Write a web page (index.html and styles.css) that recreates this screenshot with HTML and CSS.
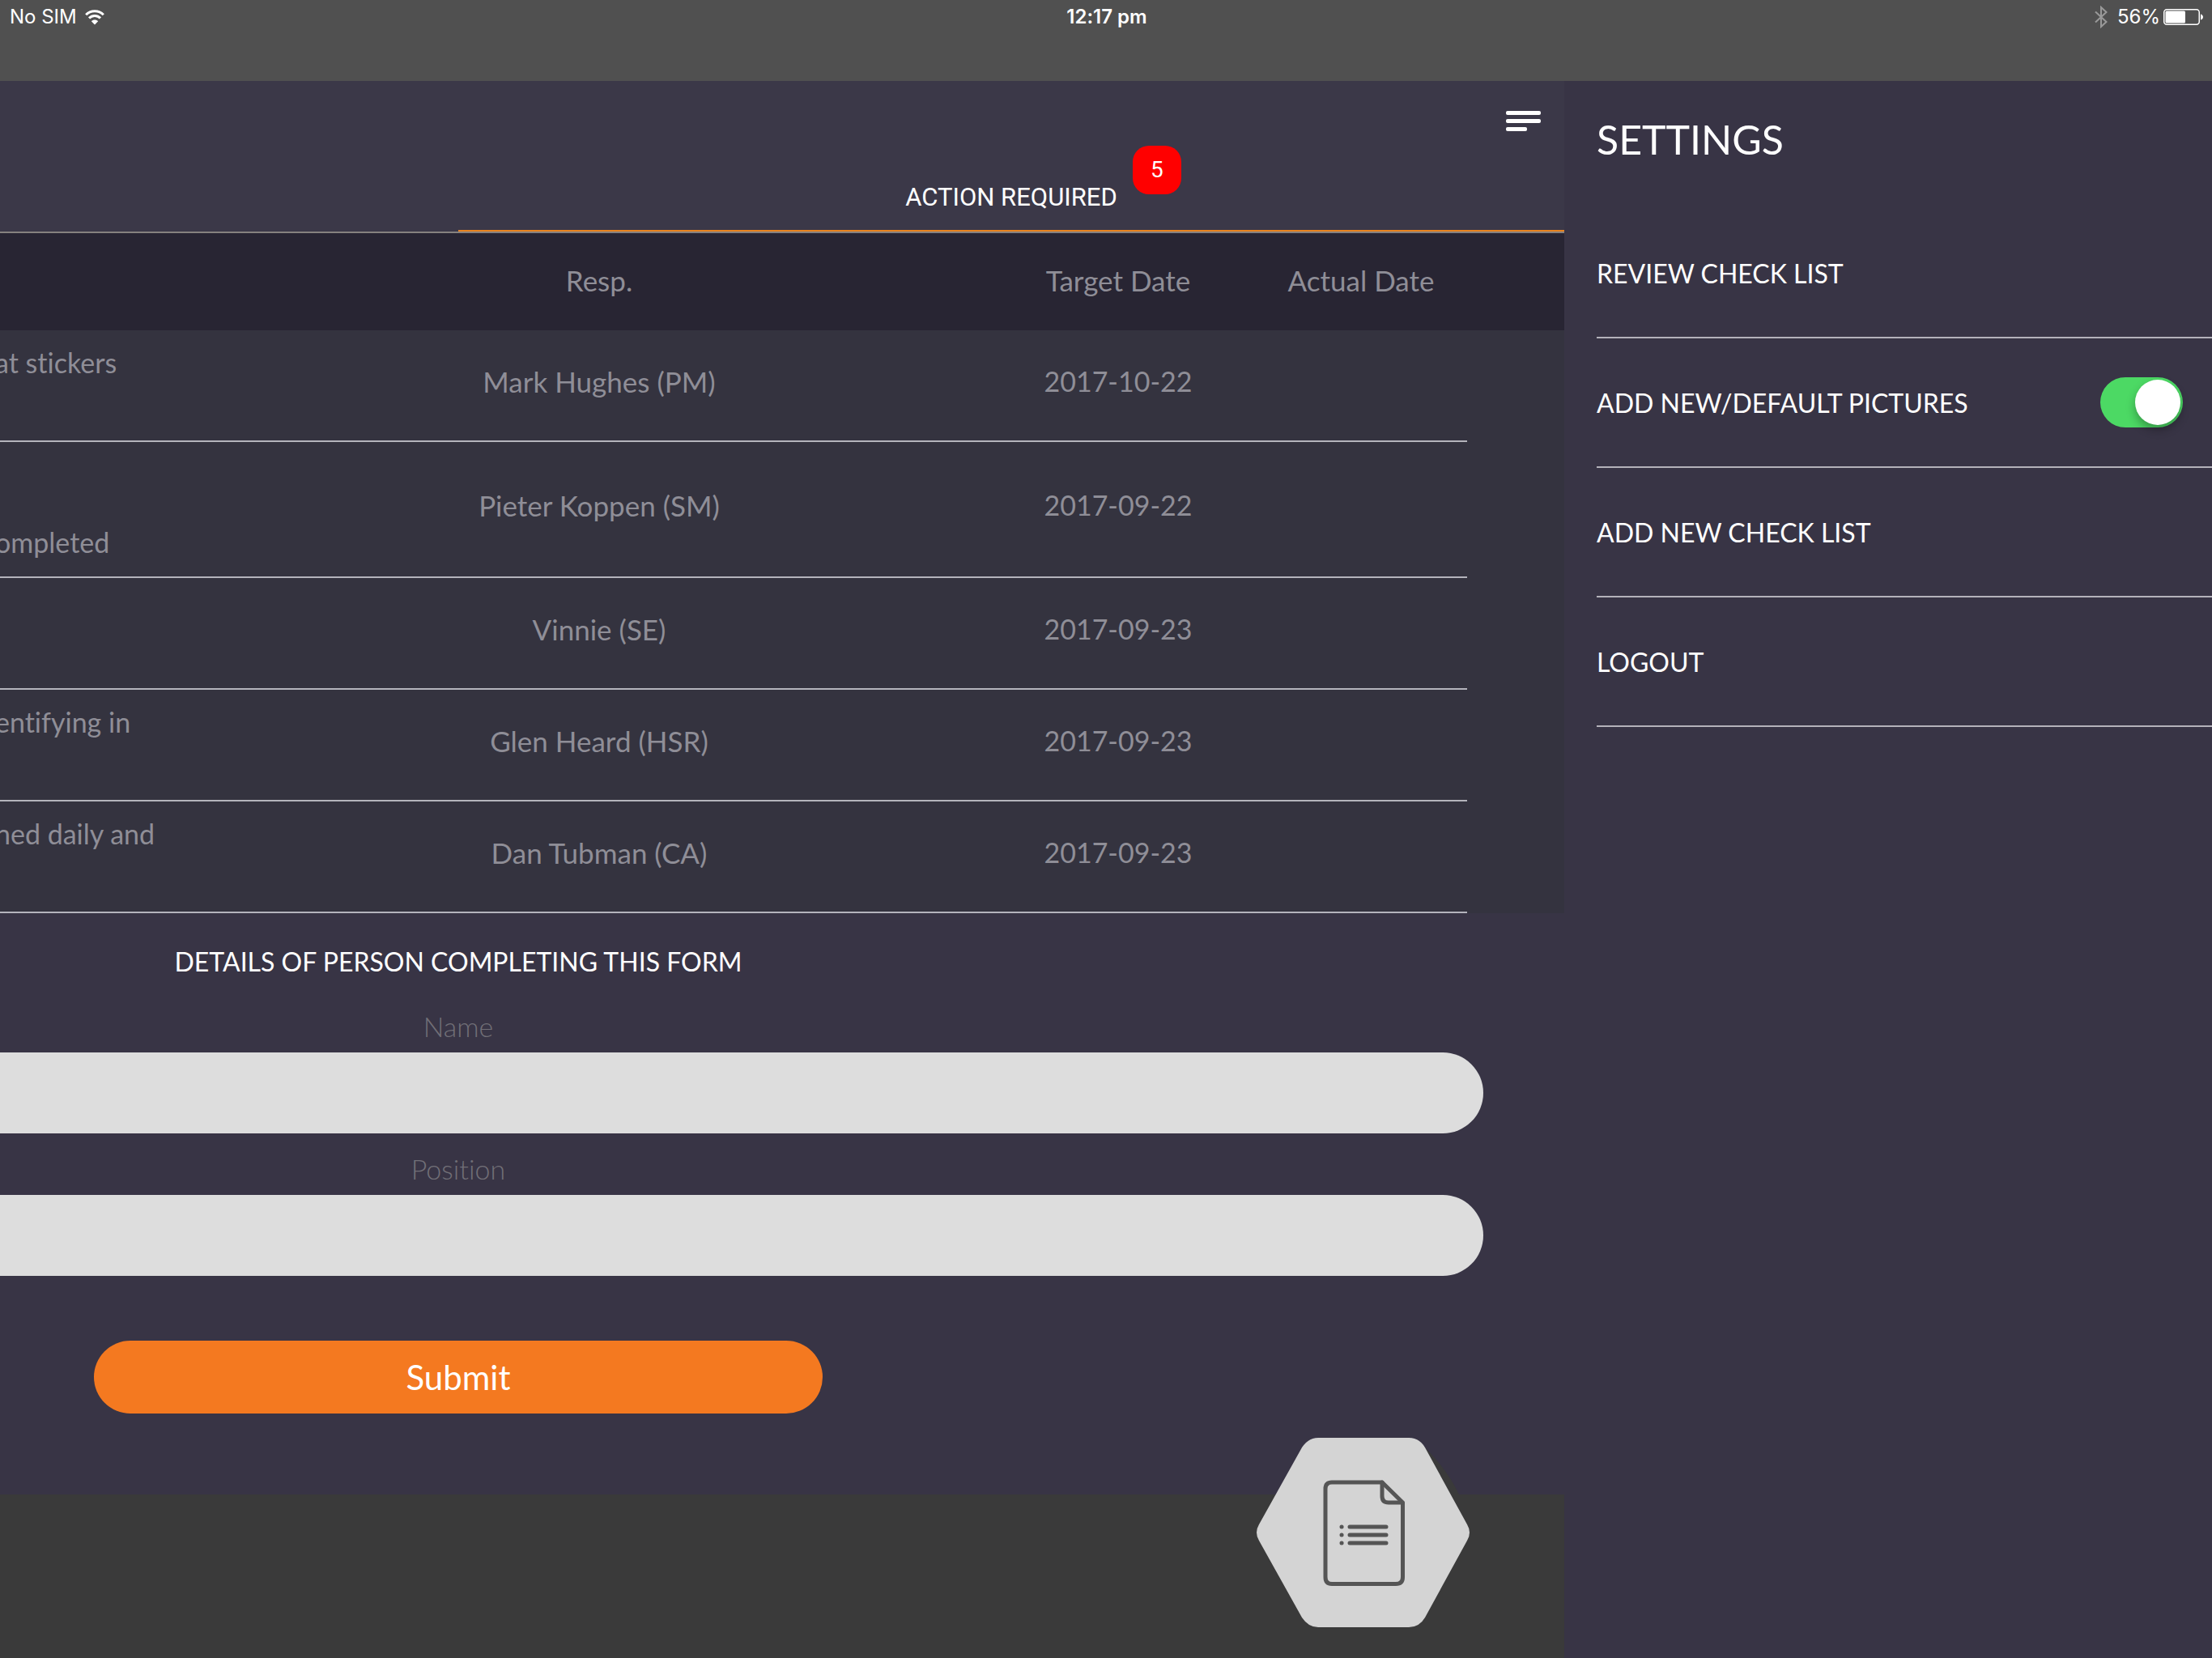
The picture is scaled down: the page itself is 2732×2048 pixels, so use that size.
FILE: index.html
```html
<!DOCTYPE html>
<html lang="en">
<head>
<meta charset="utf-8">
<meta name="viewport" content="width=device-width, initial-scale=1">
<title>Check list</title>
<link rel="stylesheet" href="styles.css">
</head>
<body>
<div class="status">
  <div class="status-left">
    <span>No SIM</span>
    <svg width="24" height="19" viewBox="0 0 24 19" aria-hidden="true">
      <g fill="none" stroke="#fff" stroke-width="3">
        <path d="M1.2 6.2C7 .2 17 .2 22.800 6.200"/>
        <path d="M5 10.400C9 6.400 15 6.400 19 10.400"/>
      </g>
      <path d="M12 18.500 7.800 14.200C10 11.800 14 11.800 16.200 14.200Z" fill="#fff"/>
    </svg>
  </div>
  <div class="status-time">12:17 pm</div>
  <div class="status-right">
    <svg class="bluetooth" width="16" height="28" viewBox="0 0 16 28" aria-hidden="true">
      <path d="M1 7.500 14.500 20 8 26V2L14.500 8 1 20.500" fill="none" stroke="#999" stroke-width="2"/>
    </svg>
    <span>56%</span>
    <svg width="50" height="20" viewBox="0 0 50 20" aria-hidden="true">
      <rect x=".75" y=".75" width="43.500" height="18.500" rx="3.500" fill="none" stroke="#fff" stroke-width="1.500"/>
      <rect x="2.500" y="2.500" width="24.500" height="15" rx="1.500" fill="#fff"/>
      <path d="M46 6.500C50 7.500 50 12.500 46 13.500Z" fill="#fff"/>
    </svg>
  </div>
</div>

<div class="app">
  <main class="page">
    <header class="topbar">
      <button class="menu" type="button" aria-label="Menu">
        <svg width="44" height="26" viewBox="0 0 44 26" aria-hidden="true">
          <g fill="#fff"><rect width="43" height="5" rx="2"/><rect y="10" width="43" height="5" rx="2"/><rect y="20" width="26" height="5" rx="2"/></g>
        </svg>
      </button>
      <nav class="tabs">
        <div class="tab"></div>
        <a class="tab tab-active" href="#actions"><span class="tab-label">ACTION REQUIRED<span class="badge">5</span></span></a>
      </nav>
    </header>

    <table class="actions" id="actions">
      <colgroup><col class="col-action"><col><col class="col-target"><col class="col-actual"><col class="col-end"></colgroup>
      <thead>
        <tr><th></th><th>Resp.</th><th>Target Date</th><th>Actual Date</th><th></th></tr>
      </thead>
      <tbody>
        <tr><td>at stickers<br>&nbsp;</td><td class="person">Mark Hughes (PM)</td><td>2017-10-22</td><td></td><td></td></tr>
        <tr><td>&nbsp;<br>&nbsp;<br>ompleted</td><td class="person">Pieter Koppen (SM)</td><td>2017-09-22</td><td></td><td></td></tr>
        <tr><td></td><td class="person">Vinnie (SE)</td><td>2017-09-23</td><td></td><td></td></tr>
        <tr><td>entifying in<br>&nbsp;</td><td class="person">Glen Heard (HSR)</td><td>2017-09-23</td><td></td><td></td></tr>
        <tr><td>ned daily and<br>&nbsp;</td><td class="person">Dan Tubman (CA)</td><td>2017-09-23</td><td></td><td></td></tr>
      </tbody>
    </table>

    <form class="details">
      <h2 class="details-title">DETAILS OF PERSON COMPLETING THIS FORM</h2>
      <label class="field-label" for="name">Name</label>
      <input class="field" id="name" type="text">
      <label class="field-label" for="position">Position</label>
      <input class="field" id="position" type="text">
      <button class="submit" type="submit">Submit</button>
    </form>

    <footer class="footer">
      <button class="report" type="button" aria-label="Report">
        <svg width="264" height="234" viewBox="0 0 264 234" aria-hidden="true">
          <path d="M208 12Q236 40 250 70V90H236Z" fill="#3a3a3a"/>
          <path d="M76 0H188Q201 0 208 12L260 107Q266 117 260 127L208 222Q201 234 188 234H76Q64 234 56 222L3 127Q-3 117 3 107L56 12Q64 0 76 0Z" fill="#d4d4d4"/>
          <g fill="none" stroke="#555" stroke-width="5" stroke-linejoin="round" stroke-linecap="round">
            <path d="M155 55H93Q85 55 85 63V172Q85 180.500 93 180.500H172Q180.500 180.500 180.500 172V80Z"/>
            <path d="M155 55V72Q155 80 163 80H180"/>
            <path d="M115 110H160M115 120H160M115 130H160"/>
            <path d="M105 110h.1M105 120h.1M105 130h.1"/>
          </g>
        </svg>
      </button>
    </footer>
  </main>

  <aside class="drawer">
    <h1 class="drawer-title">SETTINGS</h1>
    <ul class="drawer-list">
      <li class="drawer-item"><a href="#review">REVIEW CHECK LIST</a></li>
      <li class="drawer-item"><label for="pictures">ADD NEW/DEFAULT PICTURES</label><input class="switch" id="pictures" type="checkbox" checked></li>
      <li class="drawer-item"><a href="#new">ADD NEW CHECK LIST</a></li>
      <li class="drawer-item"><a href="#logout">LOGOUT</a></li>
    </ul>
  </aside>
</div>
</body>
</html>
```
FILE: styles.css
```css
* { box-sizing: border-box; }

body {
  margin: 0;
  min-height: 100vh;
  display: flex;
  flex-direction: column;
  overflow-x: hidden;
  background: #383445;
  color: #fff;
  font-family: Lato, "Open Sans", sans-serif;
  font-size: 32px;
  font-variant-ligatures: none;
}

a { color: inherit; text-decoration: none; }
button { border: 0; padding: 0; background: none; color: inherit; font: inherit; cursor: pointer; }
svg { display: block; }

/* Device status bar */
.status {
  height: 100px;
  padding: 0 10px 0 12px;
  display: grid;
  grid-template-columns: 1fr auto 1fr;
  align-items: start;
  background: #505050;
  font-family: Inter, sans-serif;
  font-size: 24px;
  line-height: 42px;
}
.status-left, .status-right { display: flex; align-items: center; height: 42px; }
.status-left { gap: 10px; }
.status-time { font-weight: 600; }
.status-right { justify-content: flex-end; gap: 4px; }
.bluetooth { margin-right: 8px; }

.app { flex: 1; display: flex; margin-left: -800px; }
.page { flex: 1; min-width: 0; display: flex; flex-direction: column; }

.topbar {
  height: 188px;
  display: flex;
  flex-direction: column;
  justify-content: space-between;
  background: #3b3848;
}
.menu { align-self: flex-end; margin: 37px 28px 0 0; }
.tabs { display: grid; grid-template-columns: 1fr 1fr; height: 84px; border-bottom: 2px solid #85817f; }
.tab { display: flex; justify-content: center; align-items: center; border-bottom: 2px solid transparent; }
.tab-active { border-color: #e8831f; }
.tab-label { position: relative; font-family: Roboto, sans-serif; font-size: 31px; line-height: 36px; }
.badge {
  position: absolute;
  left: calc(100% + 19px);
  bottom: 22px;
  width: 60px;
  border-radius: 20px;
  background: #f00;
  font-size: 28px;
  line-height: 60px;
  text-align: center;
}

.actions {
  width: 100%;
  table-layout: fixed;
  border-collapse: separate;
  border-spacing: 0;
  background: #34333f;
  color: #8f8e97;
  font-size: 34px;
  line-height: 46px;
  text-align: center;
}
.col-action { width: 1068px; }
.col-target { width: 338px; }
.col-actual { width: 262px; }
.col-end { width: 120px; }
.actions th { height: 120px; padding: 0 0 4px; background: #282533; font-size: 35px; font-weight: 400; }
.actions td { height: 138px; padding: 9px 0 19px; border-bottom: 2px solid #b4b4bc; }
.actions .person { font-size: 35px; }
.actions td:first-child { padding-left: 794px; text-align: left; }
.actions td:last-child { border-bottom: 0; }

.details {
  padding: 36px 100px 100px;
  display: flex;
  flex-direction: column;
  align-items: center;
}
.details-title { margin: 0 0 32px; font-size: 32px; font-weight: 400; line-height: 48px; }
.field-label { margin-bottom: 8px; color: #716f77; font-size: 34px; font-weight: 300; line-height: 48px; }
.field {
  width: 100%;
  height: 100px;
  margin-bottom: 20px;
  padding: 0 50px;
  border: 0;
  border-radius: 50px;
  background: #ddd;
  font: inherit;
  text-align: center;
}
.submit {
  width: 900px;
  height: 90px;
  margin-top: 60px;
  border-radius: 45px;
  background: #f47920;
  font-size: 42px;
}

.footer { flex: 1; min-height: 202px; padding-right: 116px; background: #3a3a3a; }
.report { display: block; margin: -70px 0 0 auto; }

/* Settings drawer */
.drawer { width: 800px; padding-left: 40px; }
.drawer-title { margin: 42px 0 56px; font-size: 50px; font-weight: 400; line-height: 60px; }
.drawer-list { margin: 0; padding: 0; list-style: none; }
.drawer-item {
  height: 160px;
  padding-right: 36px;
  display: flex;
  align-items: center;
  justify-content: space-between;
  border-bottom: 2px solid #b4b2ba;
}
.switch {
  appearance: none;
  width: 102px;
  height: 62px;
  margin: 0;
  padding: 3px;
  display: flex;
  justify-content: flex-end;
  border-radius: 31px;
  background: #4cd964;
}
.switch::before {
  content: "";
  width: 56px;
  height: 56px;
  border-radius: 50%;
  background: #fff;
  box-shadow: 0 6px 12px rgba(0, 0, 0, .3);
}
```
